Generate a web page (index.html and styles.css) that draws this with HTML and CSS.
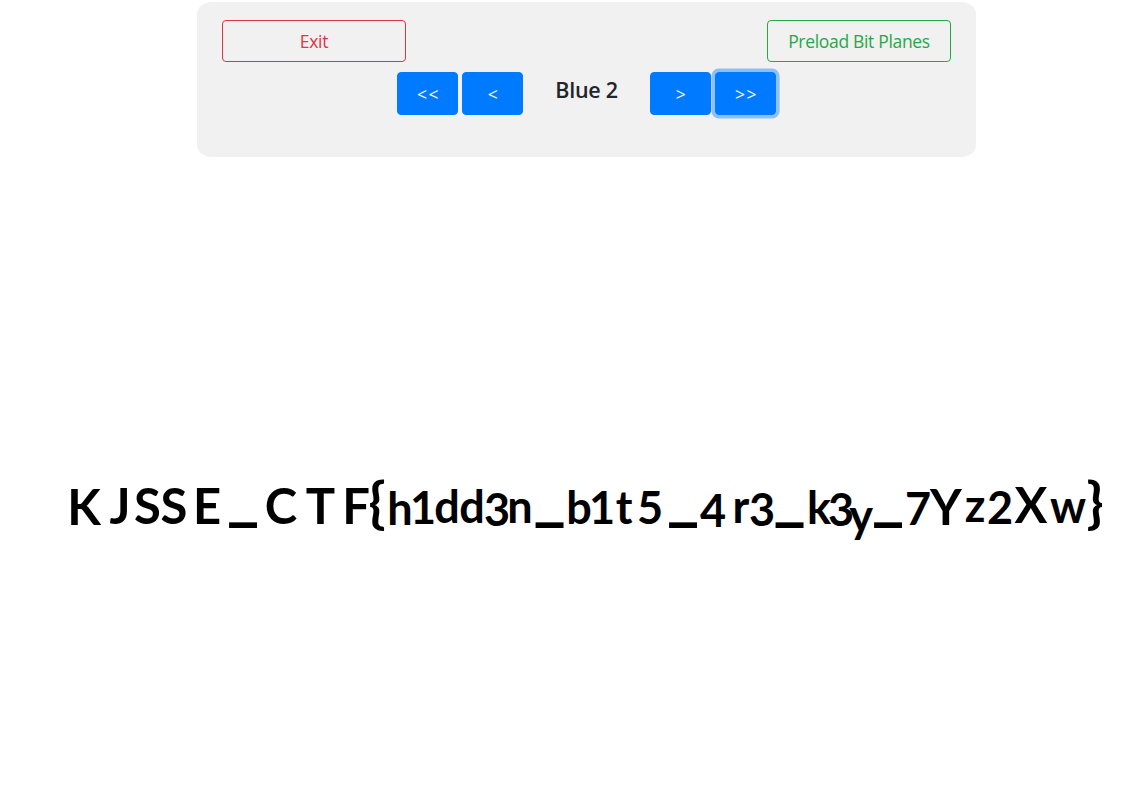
FILE: index.html
```html
<!DOCTYPE html>
<html lang="en">
<head>
<meta charset="utf-8">
<title>Bit Planes</title>
<link rel="stylesheet" href="styles.css">
</head>
<body>
<header class="panel">
  <div class="actions">
    <button class="btn btn-exit">Exit</button>
    <button class="btn btn-preload"><span>Preload Bit Planes</span></button>
  </div>
  <nav class="planes">
    <button class="btn btn-step">&lt;&lt;</button>
    <button class="btn btn-step">&lt;</button>
    <h1 class="plane-name">Blue 2</h1>
    <button class="btn btn-step">&gt;</button>
    <button class="btn btn-step focused">&gt;&gt;</button>
  </nav>
</header>
<main class="viewer">
  <svg class="plane" viewBox="0 0 1128 635" width="1128" height="635">
    <text class="flag" x="84 120 147.5 174 207 243 281 320.5 356 377 400 423 447 472 497 520 549.5 579 602 624 650 683 713 741 762 789.5 819 841 861 888 918 946 975 1000 1031 1068 1095"
      y="368 367 367 367 367 361 367 367 367 365 368 367 366 366 369 366 361 367 367 367 367 361 370 366 369 361 367 369 375 361 368 368 365 367 366 366 365">KJSSE<tspan class="line">_</tspan>CTF<tspan class="brace">{</tspan><tspan class="small">h1dd3n</tspan><tspan class="line">_</tspan><tspan class="small">b1t5</tspan><tspan class="line">_</tspan><tspan class="small">4r3</tspan><tspan class="line">_</tspan><tspan class="small">k3y</tspan><tspan class="line">_</tspan><tspan class="small">7</tspan>Y<tspan class="small">z2</tspan>X<tspan class="small">w</tspan><tspan class="brace">}</tspan></text>
  </svg>
</main>
</body>
</html>
```
FILE: styles.css
```css
* { box-sizing: border-box; }
body {
  margin: 0;
  height: 792px;
  overflow: hidden;
  background: #fff;
  color: #212529;
  font-family: "Segoe UI", "Open Sans", "Noto Sans", sans-serif;
}
.panel {
  width: 779px;
  height: 155px;
  margin: 2px 0 0 197px;
  padding: 18px 25px 0;
  border-radius: 15px / 12px;
  background: #f1f1f1;
}
.actions { display: flex; justify-content: space-between; }
.btn {
  display: flex;
  align-items: center;
  justify-content: center;
  padding: 0;
  border: 1px solid;
  border-radius: 4px;
  background: transparent;
  font: 400 17.5px/24px "Segoe UI", "Open Sans", "Noto Sans", sans-serif;
  white-space: nowrap;
}
.btn-exit, .btn-preload { width: 184px; height: 42px; }
.btn-exit { color: #dc3545; letter-spacing: -0.3px; }
.btn-preload { color: #28a745; letter-spacing: -0.32px; }
.planes { display: flex; gap: 4px; justify-content: center; margin-top: 10px; }
.btn-step {
  width: 61px;
  height: 43px;
  padding-left: 2px;
  border-color: #007bff;
  background: #007bff;
  color: #fff;
  letter-spacing: 1.5px;
}
.focused { box-shadow: 0 0 0 3.6px rgba(0, 123, 255, .42); }
.plane-name {
  width: 119px;
  margin: 4px 0 0;
  text-align: center;
  font-size: 21.5px;
  line-height: 28px;
  font-weight: 600;
  letter-spacing: -0.3px;
}
.viewer { display: flex; }
.plane { display: block; }
.flag {
  fill: #000;
  font-family: Lato, "Open Sans", sans-serif;
  font-size: 49px;
  font-weight: 700;
  text-anchor: middle;
}
.small { font-size: 45px; }
.line { font-size: 71px; }
.brace { font-size: 56px; }
```
